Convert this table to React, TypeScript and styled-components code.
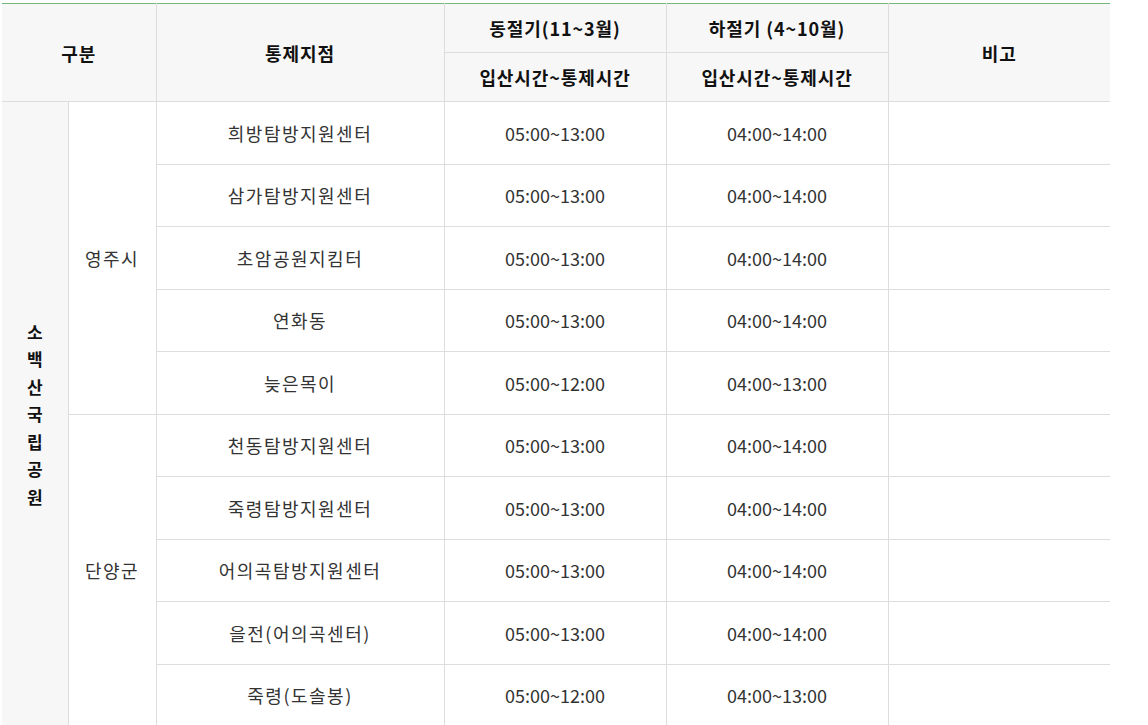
import React from 'react'
import styled, { createGlobalStyle } from 'styled-components'

const GlobalStyle = createGlobalStyle`
  body {
    margin: 0;
    background: #ffffff;
    font-family: "Noto Sans CJK KR", "Noto Sans", sans-serif;
    color: #333333;
  }
`

const Wrap = styled.div`
  padding: 3px 0 0 2px;
`

const Table = styled.table`
  width: 1108px;
  border-collapse: collapse;
  table-layout: fixed;
  border-top: 1px solid #74b87e;
`

const Th = styled.th`
  height: 48px;
  padding: 0;
  background: #f7f7f7;
  border: 1px solid #dddddd;
  border-top: 0;
  font-size: 18px;
  font-weight: 700;
  color: #111111;
  text-align: center;
  letter-spacing: 0.9px;
  &:first-child { border-left: 0; }
  &:last-child { border-right: 0; }
`

const Td = styled.td<{ $side?: boolean; $spaced?: boolean }>`
  height: 61.5px;
  padding: 0;
  border: 1px solid #dddddd;
  font-size: 18px;
  color: #333333;
  text-align: center;
  background: ${p => (p.$side ? '#f7f7f7' : '#ffffff')};
  font-weight: ${p => (p.$side ? 700 : 400)};
  letter-spacing: ${p => (p.$spaced ? '1.5px' : '0')};
  &:last-child { border-right: 0; }
`

const SideCell = styled(Td)`
  border-left: 0;
  color: #111111;
  font-size: 17px;
  line-height: 27.5px;
`

const Vertical = styled.span`
  display: inline-flex;
  flex-direction: column;
  align-items: center;
`

type Row = { place: string; winter: string; summer: string }

const yeongju: Row[] = [
  { place: '희방탐방지원센터', winter: '05:00~13:00', summer: '04:00~14:00' },
  { place: '삼가탐방지원센터', winter: '05:00~13:00', summer: '04:00~14:00' },
  { place: '초암공원지킴터', winter: '05:00~13:00', summer: '04:00~14:00' },
  { place: '연화동', winter: '05:00~13:00', summer: '04:00~14:00' },
  { place: '늦은목이', winter: '05:00~12:00', summer: '04:00~13:00' },
]

const danyang: Row[] = [
  { place: '천동탐방지원센터', winter: '05:00~13:00', summer: '04:00~14:00' },
  { place: '죽령탐방지원센터', winter: '05:00~13:00', summer: '04:00~14:00' },
  { place: '어의곡탐방지원센터', winter: '05:00~13:00', summer: '04:00~14:00' },
  { place: '을전(어의곡센터)', winter: '05:00~13:00', summer: '04:00~14:00' },
  { place: '죽령(도솔봉)', winter: '05:00~12:00', summer: '04:00~13:00' },
]

const park = '소백산국립공원'.split('')

const App: React.FC = () => {
  const renderGroup = (name: string, rows: Row[], first: boolean) =>
    rows.map((r, i) => (
      <tr key={name + i}>
        {first && i === 0 && (
          <SideCell $side rowSpan={10}>
            <Vertical>
              {park.map((c, k) => (
                <span key={k}>{c}</span>
              ))}
            </Vertical>
          </SideCell>
        )}
        {i === 0 && <Td $spaced rowSpan={rows.length}>{name}</Td>}
        <Td $spaced>{r.place}</Td>
        <Td>{r.winter}</Td>
        <Td>{r.summer}</Td>
        <Td></Td>
      </tr>
    ))

  return (
    <>
      <GlobalStyle />
      <Wrap>
        <Table>
          <colgroup>
            <col style={{ width: 66 }} />
            <col style={{ width: 88 }} />
            <col style={{ width: 288 }} />
            <col style={{ width: 222 }} />
            <col style={{ width: 222 }} />
            <col style={{ width: 222 }} />
          </colgroup>
          <thead>
            <tr>
              <Th colSpan={2} rowSpan={2}>구분</Th>
              <Th rowSpan={2}>통제지점</Th>
              <Th>동절기(11~3월)</Th>
              <Th>하절기 (4~10월)</Th>
              <Th rowSpan={2}>비고</Th>
            </tr>
            <tr>
              <Th>입산시간~통제시간</Th>
              <Th>입산시간~통제시간</Th>
            </tr>
          </thead>
          <tbody>
            {renderGroup('영주시', yeongju, true)}
            {renderGroup('단양군', danyang, false)}
          </tbody>
        </Table>
      </Wrap>
    </>
  )
}

export default App
